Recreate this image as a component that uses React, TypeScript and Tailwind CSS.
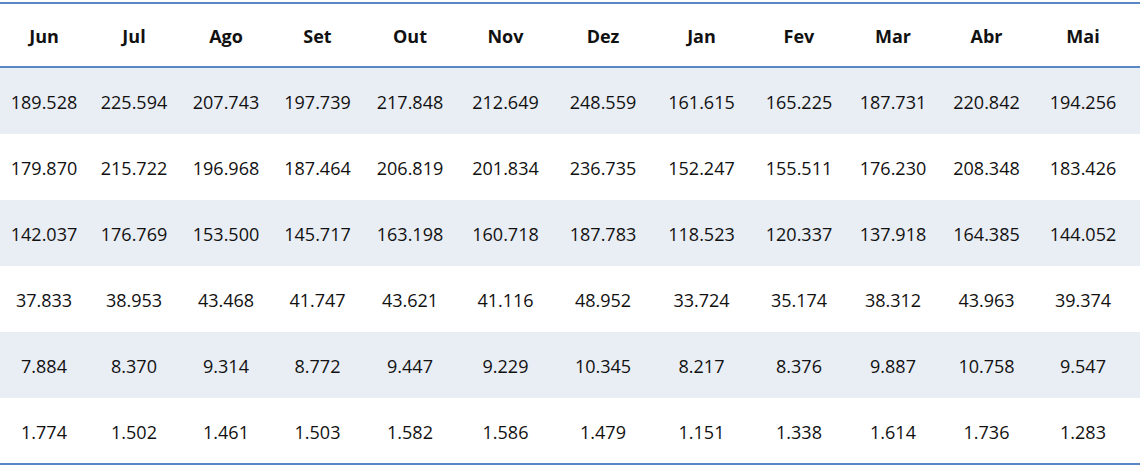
import React from "react";

const months = ["Jun", "Jul", "Ago", "Set", "Out", "Nov", "Dez", "Jan", "Fev", "Mar", "Abr", "Mai"];

const rows: string[][] = [
  ["189.528", "225.594", "207.743", "197.739", "217.848", "212.649", "248.559", "161.615", "165.225", "187.731", "220.842", "194.256"],
  ["179.870", "215.722", "196.968", "187.464", "206.819", "201.834", "236.735", "152.247", "155.511", "176.230", "208.348", "183.426"],
  ["142.037", "176.769", "153.500", "145.717", "163.198", "160.718", "187.783", "118.523", "120.337", "137.918", "164.385", "144.052"],
  ["37.833", "38.953", "43.468", "41.747", "43.621", "41.116", "48.952", "33.724", "35.174", "38.312", "43.963", "39.374"],
  ["7.884", "8.370", "9.314", "8.772", "9.447", "9.229", "10.345", "8.217", "8.376", "9.887", "10.758", "9.547"],
  ["1.774", "1.502", "1.461", "1.503", "1.582", "1.586", "1.479", "1.151", "1.338", "1.614", "1.736", "1.283"],
];

const rowHeights = ["h-[66px]", "h-[66px]", "h-[66px]", "h-[66px]", "h-[66px]", "h-[65px]"];

const gridCols =
  "grid grid-cols-[88px_92px_92px_91px_94px_97px_98px_99px_96px_92px_95px_106px]";

export default function App() {
  return (
    <div
      className="w-[1140px] h-[466px] bg-white pt-[2px] text-[#111111]"
      style={{ fontFamily: '"Open Sans", "Liberation Sans", sans-serif' }}
    >
      <div className="border-t-2 border-b-2 border-[#5b86c4]">
        <div className={`${gridCols} h-[64px] items-center border-b-2 border-[#5b86c4]`}>
          {months.map((m, i) => (
            <div
              key={m}
              className={`text-center text-[18px] font-bold pt-[3px] ${i === 11 ? "pr-2" : ""}`}
            >
              {m}
            </div>
          ))}
        </div>
        {rows.map((r, ri) => (
          <div
            key={ri}
            className={`${gridCols} ${rowHeights[ri]} items-center ${
              ri % 2 === 0 ? "bg-[#e9edf4]" : "bg-white"
            }`}
          >
            {r.map((v, ci) => (
              <div
                key={ci}
                className={`text-center text-[18px] pt-[3px] ${ci === 11 ? "pr-2" : ""}`}
              >
                {v}
              </div>
            ))}
          </div>
        ))}
      </div>
    </div>
  );
}
